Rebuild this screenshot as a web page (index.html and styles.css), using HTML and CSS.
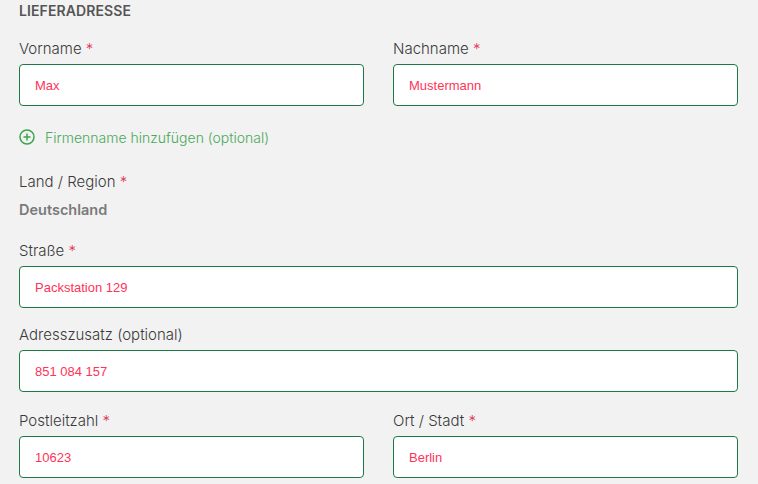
FILE: index.html
```html
<!DOCTYPE html>
<html lang="de">
<head>
<meta charset="utf-8">
<title>Lieferadresse</title>
<link rel="stylesheet" href="styles.css">
</head>
<body>
<form class="form">
  <h2 class="heading">LIEFERADRESSE</h2>
  <div class="row two">
    <div class="field">
      <label class="label">Vorname <span class="req">*</span></label>
      <div class="input">Max</div>
    </div>
    <div class="field">
      <label class="label">Nachname <span class="req">*</span></label>
      <div class="input">Mustermann</div>
    </div>
  </div>
  <div class="add-link">
    <svg class="add-icon" viewBox="0 0 16 16" width="16" height="16" aria-hidden="true">
      <circle cx="8" cy="8" r="7" fill="none" stroke="#3fa34d" stroke-width="1.5"/>
      <path d="M8 4.5v7M4.5 8h7" stroke="#3fa34d" stroke-width="1.5" fill="none"/>
    </svg>
    <span>Firmenname hinzufügen (optional)</span>
  </div>
  <div class="field country">
    <label class="label">Land / Region <span class="req">*</span></label>
    <div class="static">Deutschland</div>
  </div>
  <div class="field street">
    <label class="label">Straße <span class="req">*</span></label>
    <div class="input">Packstation 129</div>
  </div>
  <div class="field extra">
    <label class="label">Adresszusatz (optional)</label>
    <div class="input">851 084 157</div>
  </div>
  <div class="row two city-row">
    <div class="field">
      <label class="label">Postleitzahl <span class="req">*</span></label>
      <div class="input">10623</div>
    </div>
    <div class="field">
      <label class="label">Ort / Stadt <span class="req">*</span></label>
      <div class="input">Berlin</div>
    </div>
  </div>
</form>
</body>
</html>
```
FILE: styles.css
```css
html, body {
  margin: 0;
  padding: 0;
  background: #f2f2f2;
}
body {
  font-family: Inter, "Noto Sans", sans-serif;
  color: #333;
}
.form {
  width: 719px;
  padding: 0 0 0 19px;
  display: flex;
  flex-direction: column;
}
.heading {
  margin: 0;
  padding-top: 1px;
  font-size: 14px;
  font-weight: 600;
  line-height: 20px;
  letter-spacing: 0.1px;
  color: #555;
}
.row.two {
  display: grid;
  grid-template-columns: 1fr 1fr;
  column-gap: 29px;
}
.field {
  display: flex;
  flex-direction: column;
  margin-top: 18px;
}
.label {
  font-size: 15px;
  font-weight: 350;
  line-height: 20px;
  color: #3a3a3a;
}
.req {
  color: #e2335a;
}
.input {
  margin-top: 5px;
  box-sizing: border-box;
  height: 42px;
  border: 1px solid #1d7a47;
  border-radius: 4px;
  background: #fff;
  padding: 0 15px;
  display: flex;
  align-items: center;
  font-family: "Liberation Sans", Arial, sans-serif;
  font-size: 13px;
  color: #ff3358;
}
.add-link {
  margin-top: 22px;
  display: flex;
  align-items: center;
  gap: 10px;
  height: 18px;
  font-size: 14px;
  font-weight: 350;
  color: #4aa85a;
}
.add-icon {
  flex: none;
}
.field.country {
  margin-top: 26px;
}
.static {
  margin-top: 8px;
  font-size: 14.5px;
  font-weight: 600;
  line-height: 20px;
  color: #7a7a7a;
}
.field.street {
  margin-top: 21px;
}
.field.extra {
  margin-top: 17px;
}
.city-row .field {
  margin-top: 19px;
}
```
